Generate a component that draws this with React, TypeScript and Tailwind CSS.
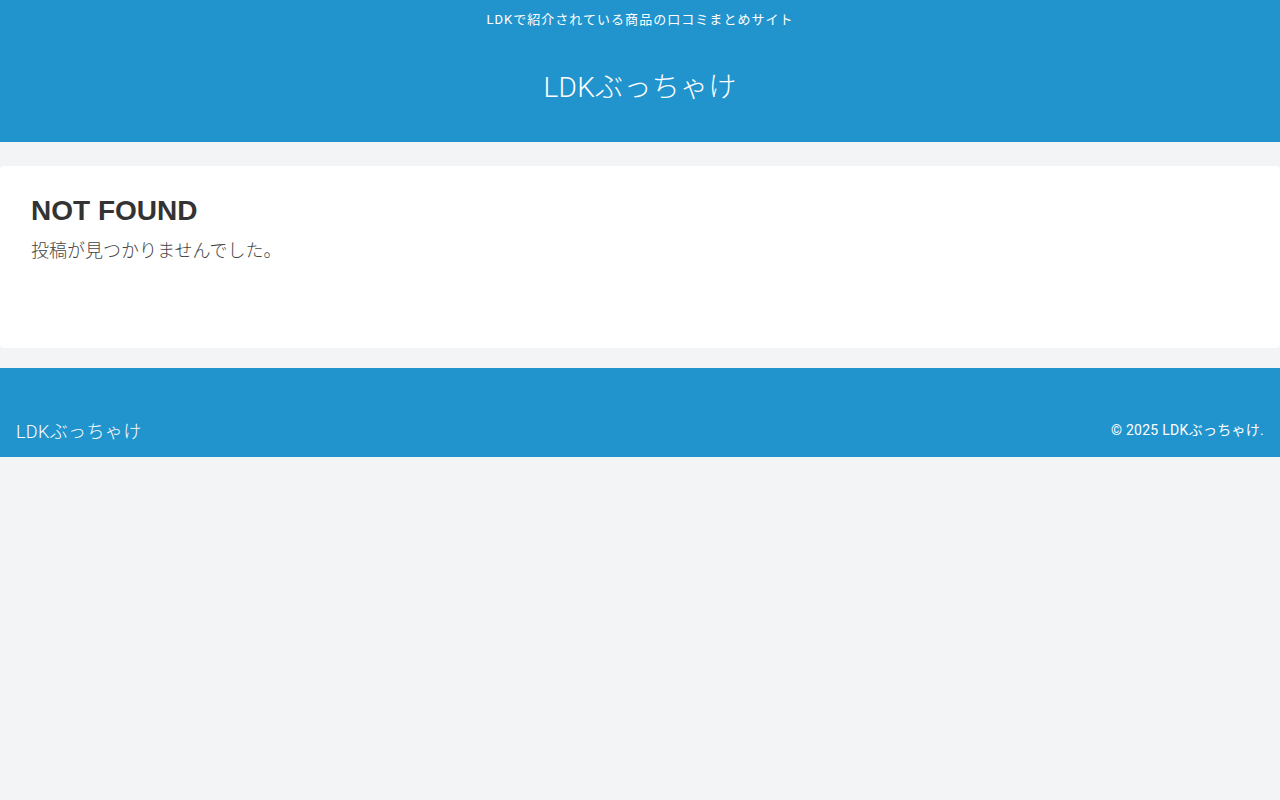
import React from 'react';

const jp = "font-['Roboto','Noto_Sans_CJK_JP',sans-serif]";

export default function App() {
  return (
    <div className={`min-h-screen bg-[#f3f4f6] ${jp}`}>
      <header className="h-[142px] bg-[#2294cd] text-white flex flex-col items-center">
        <p className="pt-[11px] text-[13px] leading-[18px] tracking-[0.08em]">LDKで紹介されている商品の口コミまとめサイト</p>
        <h1 className="mt-[41px] text-[28px] leading-[36px] tracking-[0.01em] font-light">LDKぶっちゃけ</h1>
      </header>

      <main className="pt-6 pb-5">
        <article className="h-[182px] bg-white rounded-[4px] px-[31px] pt-[27px]">
          <h2 className="font-['Liberation_Sans',Arial,sans-serif] font-bold text-[28px] leading-[36px] text-[#333]">NOT FOUND</h2>
          <p className="mt-[7px] text-[18px] leading-[30px] text-[#444] font-light">投稿が見つかりませんでした。</p>
        </article>
      </main>

      <footer className="h-[89px] bg-[#2294cd] text-white flex items-end justify-between px-4 pb-[13px]">
        <span className="text-[18px] leading-[24px] tracking-[0.02em] font-light">LDKぶっちゃけ</span>
        <span className="text-[14px] leading-[20px] mb-[4px] tracking-[0.02em]">© 2025 LDKぶっちゃけ.</span>
      </footer>
    </div>
  );
}
